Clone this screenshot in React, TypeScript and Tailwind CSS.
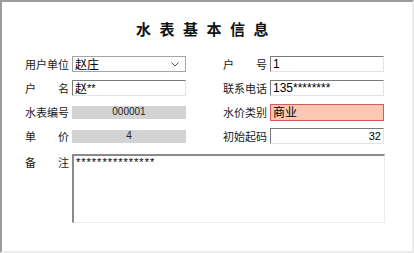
import React from "react";

const cjk = '"Noto Sans CJK SC", "Noto Sans", sans-serif';
const latin = '"Liberation Sans", "Noto Sans CJK SC", sans-serif';

function Label({ chars, align = "left" }: { chars: string[]; align?: "left" | "right" }) {
  return (
    <div className={`flex ${align === "right" ? "justify-end" : "justify-start"} text-[11px] text-[#1a1a1a] leading-none`}>
      <div className="flex w-[44px] justify-between">
        {chars.map((c, i) => (
          <span key={i}>{c}</span>
        ))}
      </div>
    </div>
  );
}

function Sunken({ children, className = "" }: { children?: React.ReactNode; className?: string }) {
  return (
    <div
      className={`h-4 w-[114px] border border-t-[#7a7a7a] border-l-[#7a7a7a] border-r-[#e3e3e3] border-b-[#e3e3e3] bg-white flex items-center px-[2px] text-[12px] leading-none text-black ${className}`}
    >
      {children}
    </div>
  );
}

export default function App() {
  return (
    <div
      className="w-[414px] h-[253px] bg-white border-l-2 border-t-2 border-l-[#9c9c9c] border-t-[#9c9c9c] border-r-2 border-b-2 border-r-[#ececec] border-b-[#ececec] overflow-hidden"
      style={{ fontFamily: cjk }}
    >
      <div className="h-[54px] pt-[19px] flex justify-center">
        <h1 className="text-[15px] font-bold tracking-[8.5px] leading-none text-[#111] pl-[7px] -ml-[8px]">
          水表基本信息
        </h1>
      </div>

      <div className="pl-[23px] flex flex-col gap-2">
        {/* row 1 */}
        <div className="flex items-center h-4">
          <div className="w-[44px]">
            <Label chars={["用", "户", "单", "位"]} />
          </div>
          <div className="ml-[3px] h-4 w-[114px] border border-[#a5a5a5] bg-white flex items-center justify-between pl-[2px] pr-[6px] text-[12px] leading-none text-black">
            <span>赵庄</span>
            <svg width="8" height="5" viewBox="0 0 8 5" className="mt-[1px]">
              <path d="M0.5 0.5 L4 4 L7.5 0.5" fill="none" stroke="#555" strokeWidth="1" />
            </svg>
          </div>
          <div className="w-[81px]">
            <Label chars={["户", "号"]} align="right" />
          </div>
          <Sunken className="ml-[3px]">
            <span style={{ fontFamily: latin }}>1</span>
          </Sunken>
        </div>

        {/* row 2 */}
        <div className="flex items-center h-4">
          <div className="w-[44px]">
            <Label chars={["户", "名"]} />
          </div>
          <Sunken className="ml-[3px]">
            <span>赵</span>
            <span className="text-[11px] mt-[1px]" style={{ fontFamily: latin }}>**</span>
          </Sunken>
          <div className="w-[81px]">
            <Label chars={["联", "系", "电", "话"]} align="right" />
          </div>
          <Sunken className="ml-[3px]">
            <span className="text-[12px]" style={{ fontFamily: latin }}>135********</span>
          </Sunken>
        </div>

        {/* row 3 */}
        <div className="flex items-center h-4">
          <div className="w-[44px]">
            <Label chars={["水", "表", "编", "号"]} />
          </div>
          <div
            className="ml-[3px] h-[13px] w-[114px] bg-[#d3d3d3] flex items-center justify-center text-[10px] leading-none text-[#222]"
            style={{ fontFamily: latin }}
          >
            000001
          </div>
          <div className="w-[81px]">
            <Label chars={["水", "价", "类", "别"]} align="right" />
          </div>
          <div className="ml-[3px] h-[17px] w-[114px] border border-[#d65a5a] bg-[#fdc8b2] flex items-center px-[2px] text-[12px] leading-none text-black">
            商业
          </div>
        </div>

        {/* row 4 */}
        <div className="flex items-center h-4">
          <div className="w-[44px]">
            <Label chars={["单", "价"]} />
          </div>
          <div
            className="ml-[3px] h-[13px] w-[114px] bg-[#d3d3d3] flex items-center justify-center text-[10px] leading-none text-[#222]"
            style={{ fontFamily: latin }}
          >
            4
          </div>
          <div className="w-[81px]">
            <Label chars={["初", "始", "起", "码"]} align="right" />
          </div>
          <Sunken className="ml-[3px] justify-end">
            <span className="text-[11px]" style={{ fontFamily: latin }}>32</span>
          </Sunken>
        </div>

        {/* remarks */}
        <div className="flex items-start mt-[2px]">
          <div className="w-[44px] pt-[3px]">
            <Label chars={["备", "注"]} />
          </div>
          <div
            className="ml-[3px] h-[69px] w-[313px] border-2 border-t-[#8a8a8a] border-l-[#8a8a8a] border-r-[#ececec] border-b-[#ececec] border-r border-b bg-white px-[2px] pt-[1px] text-[11px] leading-none text-black tracking-[1px]"
            style={{ fontFamily: latin }}
          >
            ***************
          </div>
        </div>
      </div>
    </div>
  );
}
